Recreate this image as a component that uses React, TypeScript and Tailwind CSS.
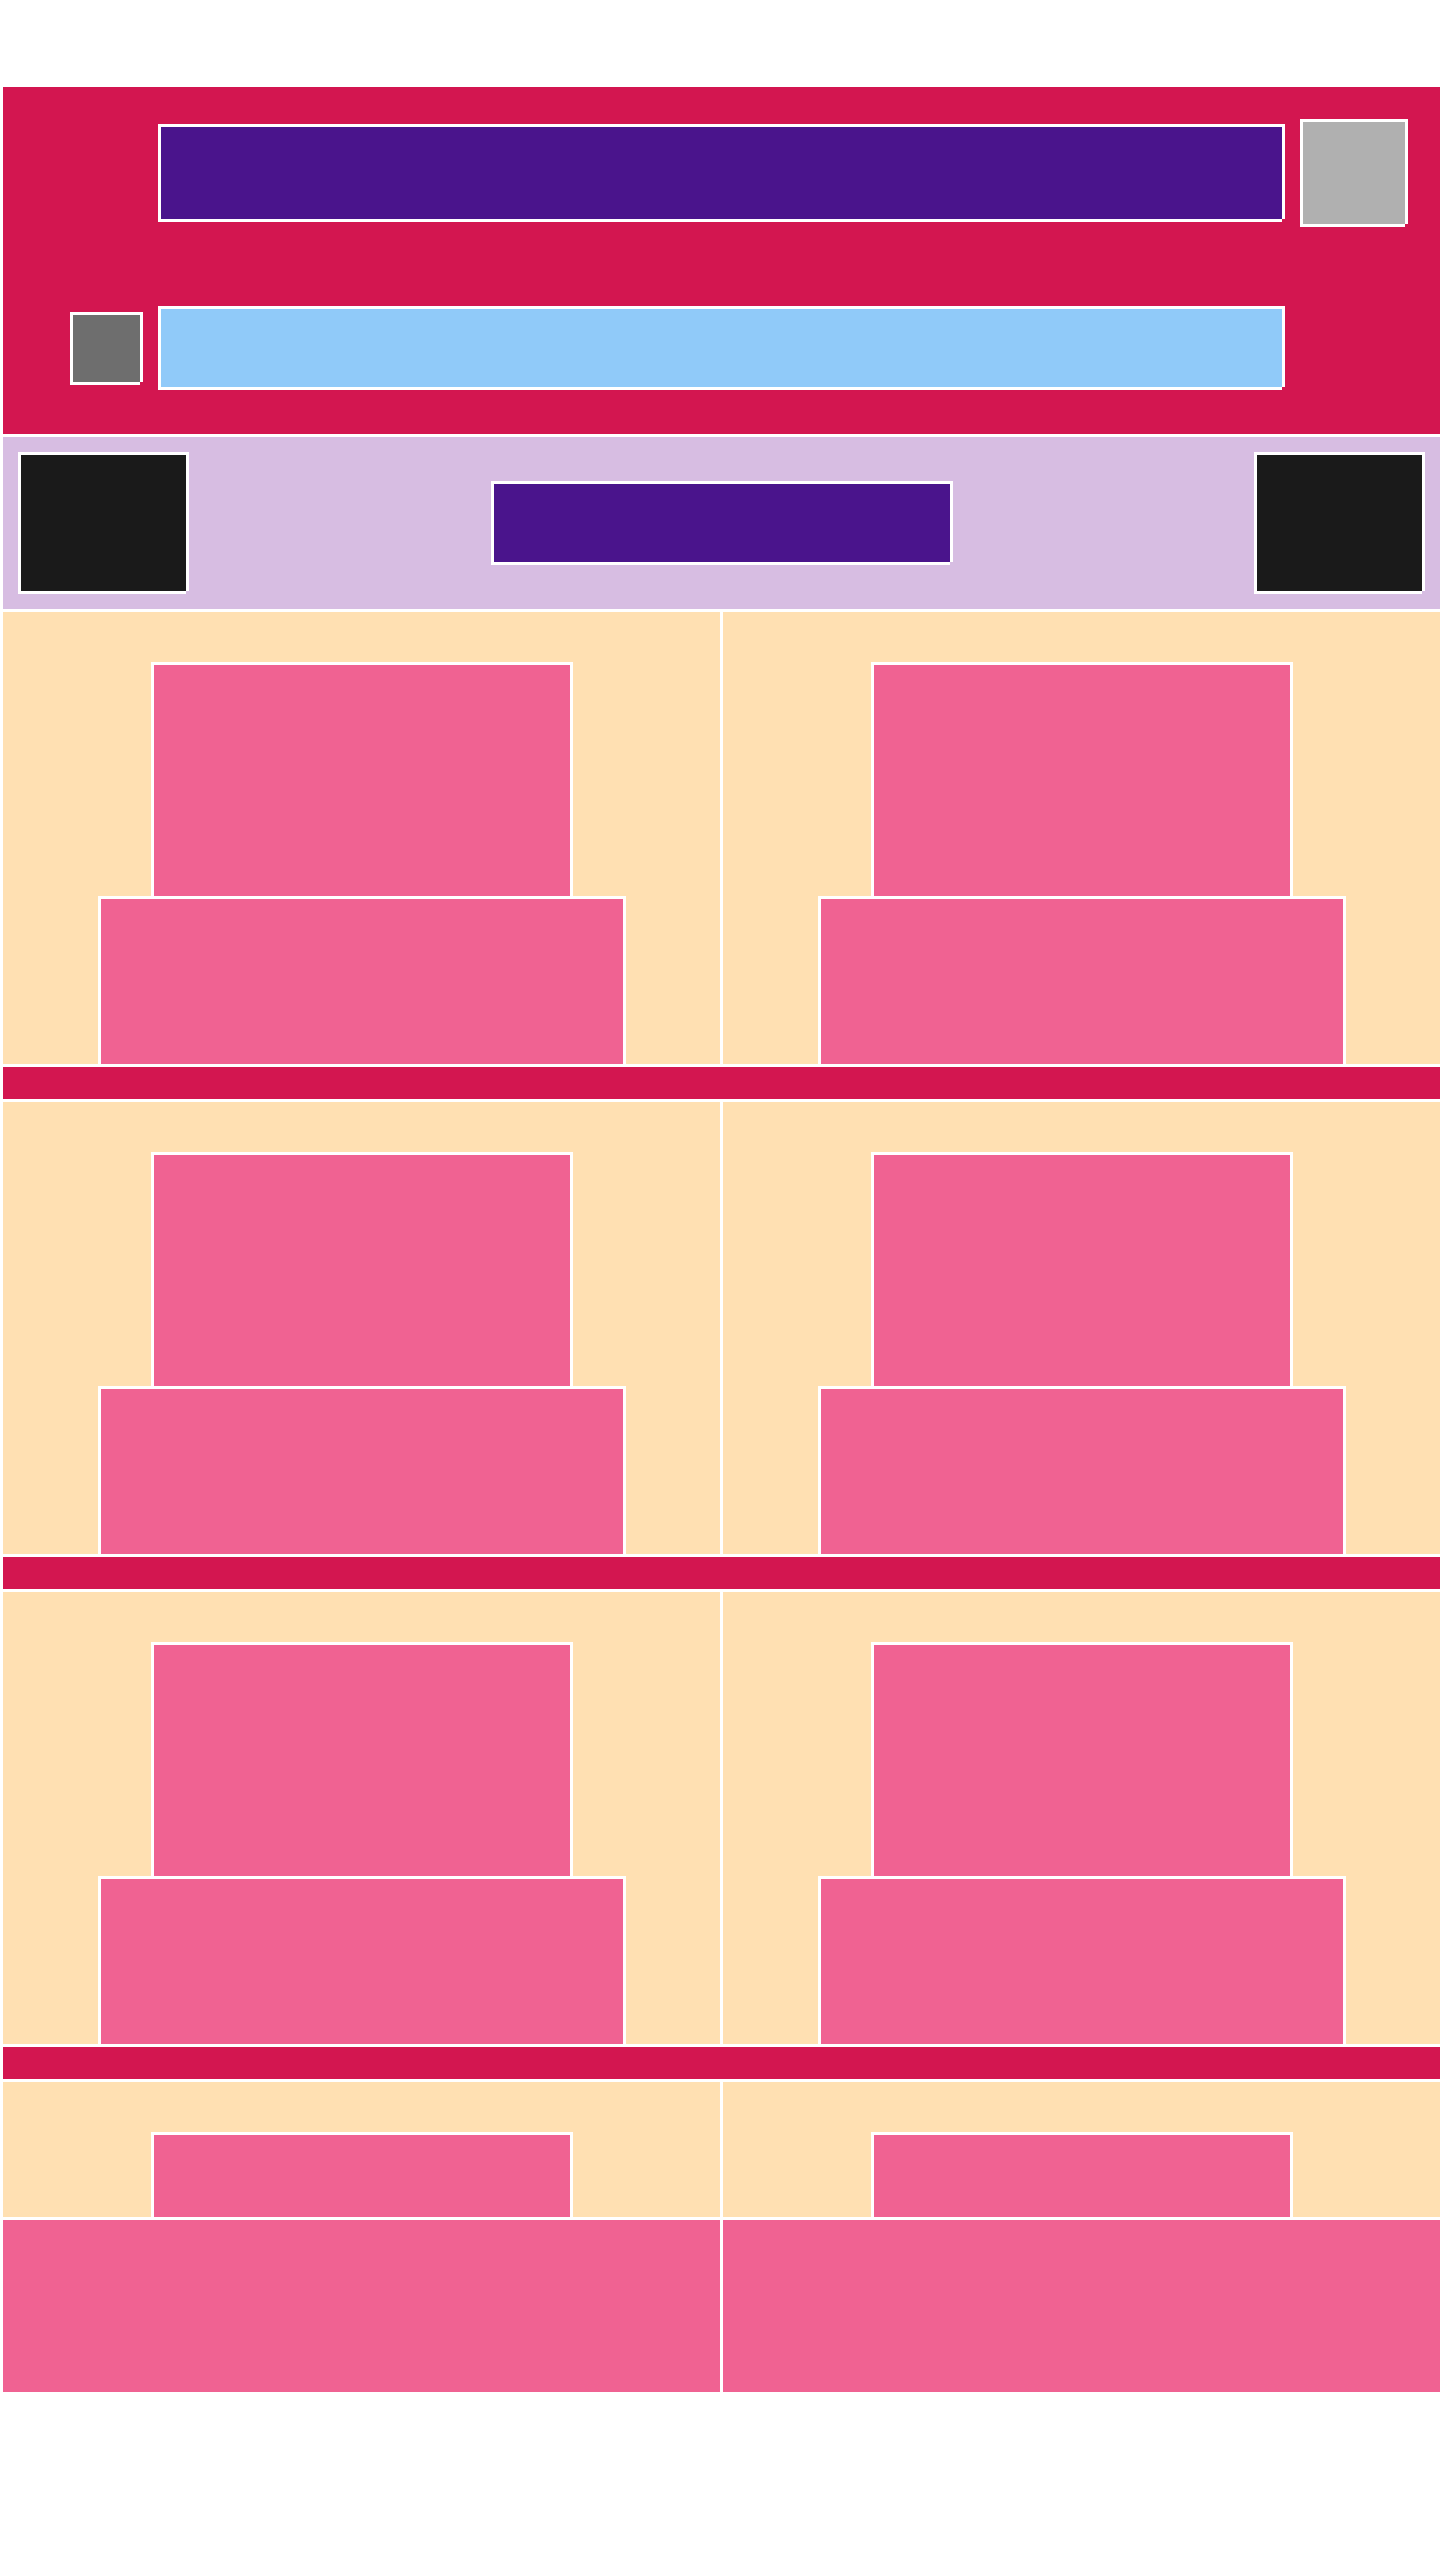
const edge =
  "shadow-[2px_-2px_0_1px_#fff,2px_-1px_0_1px_#fff,-2px_-2px_0_1px_#fff,-2px_2px_0_1px_#fff,-1px_2px_0_1px_#fff]";

const Cell = () => (
  <div className="flex h-[452px] flex-col items-center bg-[#ffe0b2] pt-[53px]">
    <div className={`h-[231px] w-[416px] shrink-0 bg-[#f06292] ${edge}`} />
    <div className={`mt-[3px] h-[165px] w-[522px] shrink-0 bg-[#f06292] ${edge}`} />
  </div>
);

const Row = () => (
  <>
    <div className="grid grid-cols-2 gap-x-[3px]">
      <Cell />
      <Cell />
    </div>
    <div className="h-[32px] bg-[#d31650]" />
  </>
);

export default function App() {
  return (
    <div className="min-h-[2560px] bg-white pl-[3px] pt-[87px]">
      <div className="flex flex-col gap-[3px]">
        {/* header */}
        <div className="flex h-[347px] flex-col bg-[#d31650]">
          <div className="flex items-center pt-[35px]">
            <div className={`ml-[158px] h-[92px] w-[1121px] bg-[#4a148c] ${edge}`} />
            <div className={`ml-[21px] h-[102px] w-[102px] bg-[#b0b0b0] ${edge}`} />
          </div>
          <div className="mt-[85px] flex items-center">
            <div className={`ml-[70px] h-[67px] w-[67px] bg-[#6e6e6e] ${edge}`} />
            <div className={`ml-[21px] h-[78px] w-[1121px] bg-[#90caf9] ${edge}`} />
          </div>
        </div>

        {/* toolbar */}
        <div className="flex h-[172px] items-center justify-between bg-[#d7bde2] px-[18px]">
          <div className={`h-[136px] w-[165px] bg-[#1a1a1a] ${edge}`} />
          <div className={`h-[78px] w-[456px] bg-[#4a148c] ${edge}`} />
          <div className={`h-[136px] w-[165px] bg-[#1a1a1a] ${edge}`} />
        </div>

        <Row />
        <Row />
        <Row />

        <div className="grid grid-cols-2 gap-x-[3px]">
          {[0, 1].map((i) => (
            <div key={i} className="flex h-[135px] flex-col items-center overflow-hidden bg-[#ffe0b2] pt-[53px]">
              <div className={`h-[231px] w-[416px] shrink-0 bg-[#f06292] ${edge}`} />
            </div>
          ))}
        </div>
        <div className="grid grid-cols-2 gap-x-[3px]">
          <div className="h-[172px] bg-[#f06292]" />
          <div className="h-[172px] bg-[#f06292]" />
        </div>
      </div>
    </div>
  );
}
